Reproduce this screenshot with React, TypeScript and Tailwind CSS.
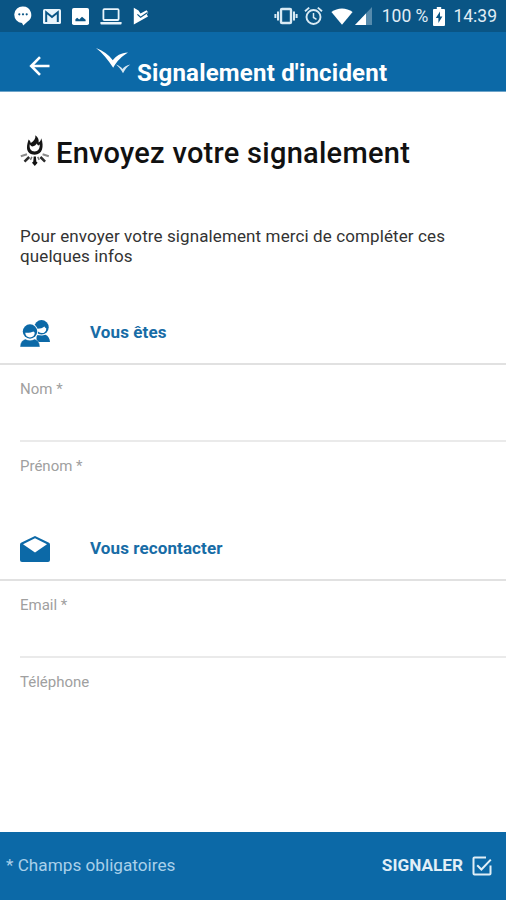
import type { ReactNode } from "react";

/* ── status bar icons ───────────────────────────────────── */
function IconMessage() {
  return (
    <svg width="18" height="20" viewBox="0 0 18 20" className="shrink-0">
      <path d="M9 .5a8.2 8.2 0 0 1 4.6 15L9.3 19.6 8 16.9A8.2 8.2 0 0 1 9 .5Z" fill="#fff" />
      <circle cx="5.3" cy="8.3" r="1.1" fill="#0a5585" />
      <circle cx="9" cy="8.3" r="1.1" fill="#0a5585" />
      <circle cx="12.7" cy="8.3" r="1.1" fill="#0a5585" />
    </svg>
  );
}

function IconMail() {
  return (
    <svg width="18" height="15" viewBox="0 0 18 15" className="shrink-0">
      <rect width="18" height="15" rx="1.6" fill="#e9f4fb" />
      <path d="M3.2 13V3.3L9 8l5.8-4.7V13" fill="none" stroke="#0a5585" strokeWidth="2" />
    </svg>
  );
}

function IconImage() {
  return (
    <svg width="17" height="17" viewBox="0 0 17 17" className="shrink-0">
      <rect width="17" height="17" rx="1.8" fill="#fff" />
      <path d="M3.4 13.2v-2l1.8-1.4 2 1.6L10 8.800l3.600 3v1.400Z" fill="#0a5585" />
    </svg>
  );
}

function IconLaptop() {
  return (
    <svg width="22" height="17" viewBox="0 0 22 17" className="shrink-0">
      <rect x="3.4" y="1.2" width="15.2" height="10.8" rx="1" fill="none" stroke="#e9f4fb" strokeWidth="1.8" />
      <path d="M.4 14h21.2v1.4a1 1 0 0 1-1 1H1.4a1 1 0 0 1-1-1Z" fill="#e9f4fb" />
    </svg>
  );
}

function IconPlayCheck() {
  return (
    <svg width="17" height="18" viewBox="0 0 17 18" className="shrink-0">
      <path d="M.8.8 5.500 3.600 7.500 6.600 13.600 3.200l1.600 2.400-1.400 1.800 1.200 2.200L.8 17.500Z" fill="#fff" />
      <path d="m4.400 7.400 3.200 2.800 7-4.600" fill="none" stroke="#0a5585" strokeWidth="1.2" />
    </svg>
  );
}

function IconVibrate() {
  return (
    <svg width="24" height="18" viewBox="0 0 24 18" className="shrink-0">
      <rect x="7" y="2" width="10" height="14" rx="1" fill="none" stroke="#d9eaf4" strokeWidth="2.4" />
      <path d="M4 4.5v9M20 4.5v9" stroke="#d9eaf4" strokeWidth="2" />
      <path d="M1.400 7v4M22.600 7v4" stroke="#d9eaf4" strokeWidth="2" />
    </svg>
  );
}

function IconAlarm() {
  return (
    <svg width="19" height="20" viewBox="0 0 19 20" className="shrink-0">
      <circle cx="9.5" cy="11" r="7" fill="none" stroke="#d9eaf4" strokeWidth="1.9" />
      <path d="M1 5.3 5.2 1.6M18 5.3l-4.2-3.7" stroke="#d9eaf4" strokeWidth="1.9" />
      <path d="M9.5 7v4.5l3 1.8" fill="none" stroke="#d9eaf4" strokeWidth="1.5" />
    </svg>
  );
}

function IconWifi() {
  return (
    <svg width="22" height="17" viewBox="0 0 22 17" className="shrink-0">
      <path d="M11 16.8.4 4C6.6-.8 15.4-.8 21.6 4Z" fill="#fff" />
    </svg>
  );
}

function IconSignal() {
  return (
    <svg width="17" height="18" viewBox="0 0 17 18" className="shrink-0">
      <path d="M17 0v18H0Z" fill="#568bad" />
      <path d="M11 6.4V18H0Z" fill="#fff" />
    </svg>
  );
}

function IconBattery() {
  return (
    <svg width="12" height="19" viewBox="0 0 12 19" className="shrink-0">
      <path d="M3.8 0h4.4v2H11a1 1 0 0 1 1 1v15a1 1 0 0 1-1 1H1a1 1 0 0 1-1-1V3a1 1 0 0 1 1-1h2.8Z" fill="#fff" />
      <path d="M7 4.5 2.8 11h2.6v5l4-6.5H7Z" fill="#0a5585" />
    </svg>
  );
}

/* ── page icons ─────────────────────────────────────────── */
function BackArrow() {
  return (
    <svg width="22" height="20" viewBox="0 0 22 20" className="shrink-0">
      <path d="M20.5 10h-18M11 1.2 2.2 10l8.8 8.8" fill="none" stroke="#fff" strokeWidth="2.6" />
    </svg>
  );
}

function BirdLogo() {
  return (
    <svg width="36" height="28" viewBox="0 0 36 28" className="shrink-0">
      <path d="M0 1C7 3.500 12.500 7.500 16.800 13.200 20 8.800 25 5.600 32 5.400 26 9.200 21 13.500 17.200 20.800 12 12.500 6.500 6 0 1Z" fill="#fff" />
      <path d="M20 17.500c2.800 1 5 2.500 6.500 4.500 1.600-2.300 4-4 7.800-4.600-3.200 2.200-5.400 5-7.300 8.800-1.800-3.500-4-6.200-7-8.700Z" fill="#d4e7f3" />
    </svg>
  );
}

function IconFlare() {
  return (
    <svg width="30" height="32" viewBox="0 0 30 32" className="shrink-0">
      <path
        d="M15.400.3c3 2 3.600 4.800 3.200 7.200C20.200 6.600 21 5.200 21.200 3.300c1.600 4.200 1.800 8.200.8 11.200-1.100 3.300-3.600 5.200-7.300 5.200-4.300 0-7.600-2.600-7.700-6.700C6.900 9.500 8 7 8.600 4.600c1.200 1 1.900 2 2.200 3.300C13.800 6.300 15.800 3.800 15.400.3Z"
        fill="#151515"
      />
      <path d="M9.700 9.300c.8 1.200 1.600 1.900 2.800 2.200 2-.6 3.300-1.600 4.400-3.100.4 1.200.8 1.700 1.500 2 .6-.3.900-.6 1.300-1.100.3 4.600-1.500 7.100-5 7.100-3.800 0-5.500-2.500-5-7.100Z" fill="#fff" />
      <path d="m9.200 22-4.700 4.700M20.400 22l4.700 4.700" stroke="#2c2c2c" strokeWidth="2.5" />
      <path d="M7 19.300.8 21.300M22.600 19.300l6.200 2" stroke="#8a8a8a" strokeWidth="2" />
      <path d="m11.900 21.800-1.500 3M17.700 21.800l1.500 3" stroke="#777" strokeWidth="1.5" />
      <path d="M13.700 21.500h2.200l.4 5 1.300 1.300-2.800 3.200-2.800-3.200 1.300-1.300Z" fill="#111" />
    </svg>
  );
}

function IconPeople() {
  return (
    <svg width="30" height="27" viewBox="0 0 30 27" className="shrink-0">
      <circle cx="21.5" cy="7.3" r="7.2" fill="#0c69a7" />
      <path d="M16.500 8.800c3.400.2 5.800-.6 7.900-2.200.7 1.200 1.100 1.500 1.900 1.800-.2 3.300-2 4.700-4.300 4.700-2.600 0-4.600-1.300-5.500-4.300Z" fill="#fff" />
      <path d="M16.500 21.500v-6.500l5.500.6 3.500-.8c2.600 1.200 4.300 3.500 4.500 7.200H17Z" fill="#0c69a7" />
      <circle cx="10" cy="11.500" r="8.100" fill="#fff" />
      <circle cx="10" cy="11.500" r="7.200" fill="#0c69a7" />
      <path d="M5.200 12.800c3.700.2 6.300-.3 8.200-1.400l1.400 1.400c-.3 3-2.100 4.600-4.800 4.600s-4.500-1.600-4.800-4.600Z" fill="#fff" />
      <path d="M0 27c.2-4.400 2-6.800 5.200-8 3.200 1.600 6.400 1.600 9.600 0 3.200 1.200 5 3.600 5.200 8Z" fill="#0c69a7" stroke="#fff" strokeWidth=".4" />
    </svg>
  );
}

function IconEnvelope() {
  return (
    <svg width="30" height="26" viewBox="0 0 30 26" className="shrink-0">
      <path d="M15 0 29 6.800c.7.400 1 1 1 1.700V24a2 2 0 0 1-2 2H2a2 2 0 0 1-2-2V8.500c0-.7.300-1.300 1-1.700Z" fill="#0c69a7" />
      <path d="M15 2.200 27 8.300 15 16.400 3 8.300Z" fill="#fff" />
    </svg>
  );
}

function IconCheckbox() {
  return (
    <svg width="20" height="20" viewBox="0 0 20 20" className="shrink-0">
      <path d="M14 1.500H2.500a1 1 0 0 0-1 1v15a1 1 0 0 0 1 1h15a1 1 0 0 0 1-1V9.500" fill="none" stroke="#e1eff7" strokeWidth="2" />
      <path d="m5.200 9.300 4.200 4.200 9.400-9.900" fill="none" stroke="#e1eff7" strokeWidth="2" />
    </svg>
  );
}

/* ── form pieces ────────────────────────────────────────── */
function SectionTitle({ icon, children }: { icon: ReactNode; children: ReactNode }) {
  return (
    <div className="flex h-[62px] items-center border-b-2 border-[#e1e1e1] pl-5">
      <span className="w-[70px]">{icon}</span>
      <h2 className="text-[17px] font-bold tracking-[0.1px] text-[#176ca6]">{children}</h2>
    </div>
  );
}

function Field({ label, last }: { label: string; last?: boolean }) {
  return (
    <label className={`ml-5 block h-[77px] pt-3.5 text-[15px] leading-5 text-[#a0a0a0] ${last ? "" : "border-b-2 border-[#eaeaea]"}`}>
      {label}
    </label>
  );
}

export default function App() {
  return (
    <div className="flex h-[900px] w-[506px] flex-col overflow-hidden bg-white font-[Roboto,sans-serif]">
      {/* status bar */}
      <div className="flex h-8 shrink-0 items-center justify-between bg-[#0a5585] pr-[9px] pl-[14px] text-[17.5px] text-[#e0edf5]">
        <div className="flex items-center gap-[11px]">
          <IconMessage />
          <IconMail />
          <IconImage />
          <IconLaptop />
          <IconPlayCheck />
        </div>
        <div className="flex items-center">
          <IconVibrate />
          <span className="ml-1.5"><IconAlarm /></span>
          <span className="ml-2"><IconWifi /></span>
          <span className="ml-0.5"><IconSignal /></span>
          <span className="ml-[10px] whitespace-nowrap">100 %</span>
          <span className="mr-2 ml-[5px]"><IconBattery /></span>
          <span>14:39</span>
        </div>
      </div>

      {/* app bar */}
      <header className="flex h-[60px] shrink-0 items-start border-b border-[#6da4c9] bg-[#0c69a7] pl-[29px] text-white">
        <span className="mt-6"><BackArrow /></span>
        <span className="mt-[15px] ml-[45px]"><BirdLogo /></span>
        <h1 className="mt-[25px] ml-[5px] text-[24px] leading-8 font-bold tracking-[0.2px]">Signalement d'incident</h1>
      </header>

      <main className="flex-1">
        <div className="flex items-start pt-10 pl-5">
          <span className="mt-[3px]"><IconFlare /></span>
          <h2 className="ml-[6px] text-[29px] leading-[42px] font-medium tracking-[0.27px] text-[#111]">Envoyez votre signalement</h2>
        </div>
        <p className="mt-[52px] pr-10 pl-5 text-[17px] leading-5 tracking-[0.11px] text-[#333]">
          Pour envoyer votre signalement merci de compléter ces quelques infos
        </p>

        <section className="mt-[37px]">
          <SectionTitle icon={<IconPeople />}>Vous êtes</SectionTitle>
          <Field label="Nom *" />
          <Field label="Prénom *" last />
        </section>
        <section>
          <SectionTitle icon={<IconEnvelope />}>Vous recontacter</SectionTitle>
          <Field label="Email *" />
          <Field label="Téléphone" last />
        </section>
      </main>

      {/* bottom bar */}
      <footer className="flex h-[68px] shrink-0 items-center justify-between bg-[#0c69a7] pr-[14px] pl-1.5 text-[17.2px]">
        <span className="text-[#a9d0ea]">* Champs obligatoires</span>
        <button className="flex items-center gap-[9px] font-bold text-[#e1eff7]">
          SIGNALER
          <IconCheckbox />
        </button>
      </footer>
    </div>
  );
}
